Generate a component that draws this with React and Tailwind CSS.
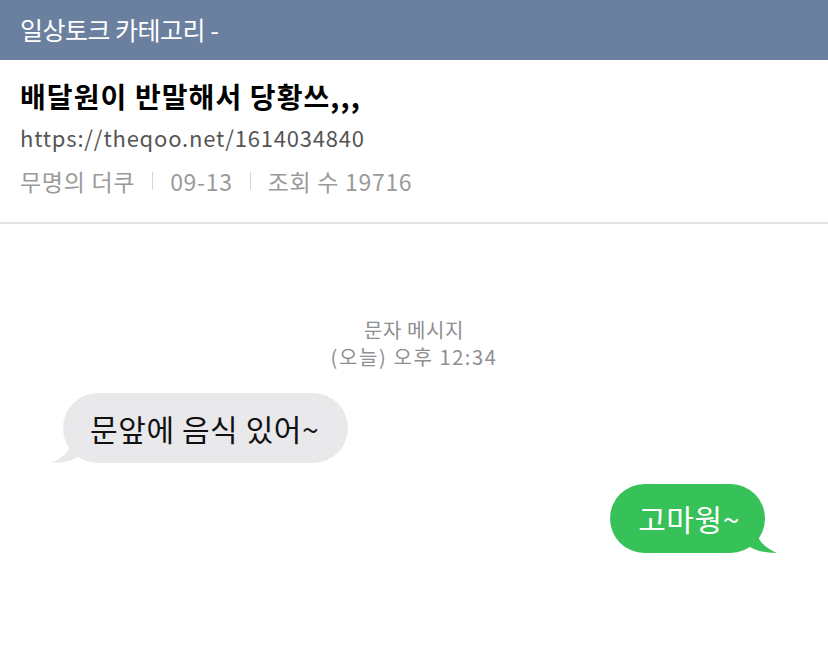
import React from 'react'

const Meta = () => (
  <div className='flex items-center text-[23px] text-[#9a9a9a] mt-[12px] leading-[32px] tracking-[0.7px]'>
    <span>무명의 더쿠</span>
    <span className='mx-[17px] w-px h-[18px] bg-[#d6d6d6]'></span>
    <span>09-13</span>
    <span className='mx-[17px] w-px h-[18px] bg-[#d6d6d6]'></span>
    <span>조회 수 19716</span>
  </div>
)

export default function App() {
  return (
    <div className='w-[828px] h-[653px] bg-white overflow-hidden' style={{ fontFamily: '"Noto Sans CJK KR", "Noto Sans", sans-serif' }}>
      <div className='h-[60px] bg-[#6b7f9f] flex items-center px-[20px]'>
        <span className='text-white text-[25px] tracking-[-0.5px]'>일상토크 카테고리 -</span>
      </div>

      <div className='px-[20px] pt-[15px] h-[164px] border-b-2 border-[#e4e4e4]'>
        <h1 className='font-bold text-[28px] leading-[42px] text-black tracking-[1.1px]'>배달원이 반말해서 당황쓰,,,</h1>
        <p className='text-[22px] text-[#555] leading-[32px] mt-[4px] tracking-[0.8px]'>https://theqoo.net/1614034840</p>
        <Meta />
      </div>

      <div className='flex flex-col pt-[92px]'>
        <div className='flex flex-col items-center text-[20px] leading-[27px] text-[#8e8e93] tracking-[0.6px]'>
          <span>문자 메시지</span>
          <span className='tracking-[1.6px]'>(오늘) 오후 12:34</span>
        </div>

        <div className='relative ml-[63px] mt-[23px] self-start'>
          <svg className='absolute left-[-12px] bottom-0' width='40' height='32' viewBox='0 0 40 32'>
            <path d='M22 0 C22 14 18 24 0 32 C16 32 26 28 32 22 L40 0 Z' fill='#e9e9eb' />
          </svg>
          <div className='relative h-[70px] pl-[27px] pr-[29px] rounded-[35px] bg-[#e9e9eb] flex items-center text-[30px] text-[#111] tracking-[0.6px]'>
            문앞에 음식 있어~
          </div>
        </div>

        <div className='relative self-end mr-[63px] mt-[21px]'>
          <svg className='absolute right-[-12px] bottom-0' width='40' height='32' viewBox='0 0 40 32'>
            <path d='M18 0 C18 14 22 24 40 32 C24 32 14 28 8 22 L0 0 Z' fill='#37c159' />
          </svg>
          <div className='relative h-[69px] pl-[28px] pr-[25px] rounded-[35px] bg-[#37c159] flex items-center text-[30px] text-white tracking-[0.6px]'>
            고마웡~
          </div>
        </div>
      </div>
    </div>
  )
}
